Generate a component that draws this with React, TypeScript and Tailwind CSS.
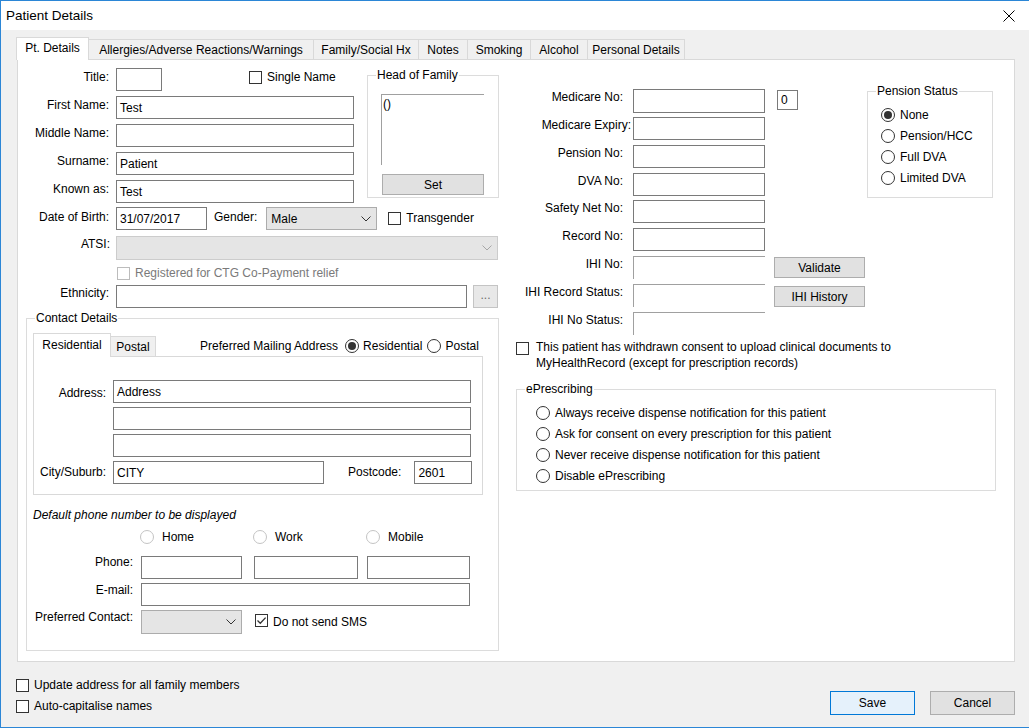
import React from 'react';

const FONT = "font-['Liberation_Sans',Arial,sans-serif]";

type Cls = { className?: string };

function TextBox({ className = '', value }: Cls & { value?: string }) {
  return (
    <div className={`flex h-[23px] shrink-0 items-center border border-[#7a7a7a] bg-white pl-[3px] ${className}`}>
      {value}
    </div>
  );
}

// read-only IHI boxes only show the sunken top/left edge
function ReadOnlyBox({ className = '' }: Cls) {
  return <div className={`h-[23px] w-[132px] shrink-0 border-t border-l border-[#a0a0a0] ${className}`} />;
}

function Chevron({ color = '#333333' }: { color?: string }) {
  return (
    <svg width="10" height="6" viewBox="0 0 10 6" className="shrink-0">
      <path d="M0.5 0.5 L5 5 L9.5 0.5" fill="none" stroke={color} strokeWidth="1" />
    </svg>
  );
}

function Combo({ className = '', value, disabled }: Cls & { value?: string; disabled?: boolean }) {
  return (
    <div
      className={`flex shrink-0 items-center justify-between border bg-[#e5e5e5] pl-[4px] pr-[5px] ${
        disabled ? 'border-[#cccccc]' : 'border-[#acacac]'
      } ${className}`}
    >
      <span>{value}</span>
      <Chevron color={disabled ? '#a6a6a6' : '#333333'} />
    </div>
  );
}

function Button({ className = '', children }: Cls & { children?: React.ReactNode }) {
  return (
    <div className={`flex shrink-0 items-center justify-center border border-[#adadad] bg-[#e1e1e1] ${className}`}>
      {children}
    </div>
  );
}

function Check({ className = '', checked, disabled }: Cls & { checked?: boolean; disabled?: boolean }) {
  return (
    <span
      className={`flex h-[13px] w-[13px] shrink-0 items-center justify-center border bg-white ${
        disabled ? 'border-[#bcbcbc]' : 'border-[#333333]'
      } ${className}`}
    >
      {checked && (
        <svg width="11" height="11" viewBox="0 0 11 11">
          <path d="M1.5 5.5 L4.3 8.3 L9.6 2.6" fill="none" stroke="#333333" strokeWidth="1.3" />
        </svg>
      )}
    </span>
  );
}

function Radio({ className = '', checked, disabled }: Cls & { checked?: boolean; disabled?: boolean }) {
  return (
    <span
      className={`flex h-[14px] w-[14px] shrink-0 items-center justify-center rounded-full border bg-white ${
        disabled ? 'border-[#c4c4c4]' : 'border-[#333333]'
      } ${className}`}
    >
      {checked && <span className="h-[8px] w-[8px] rounded-full bg-[#333333]" />}
    </span>
  );
}

function Group({ title, className = '', children }: Cls & { title: string; children?: React.ReactNode }) {
  return (
    <div className={`flex shrink-0 flex-col border border-[#dcdcdc] ${className}`}>
      <div className="-mt-[8px] ml-[8px] w-fit bg-white px-[1px] leading-[14px]">{title}</div>
      {children}
    </div>
  );
}

function Label({ className = '', children }: Cls & { children?: React.ReactNode }) {
  return <div className={`shrink-0 whitespace-nowrap text-right ${className}`}>{children}</div>;
}

const TABS = [
  { label: 'Allergies/Adverse Reactions/Warnings', w: 'w-[225px]' },
  { label: 'Family/Social Hx', w: 'w-[105px]' },
  { label: 'Notes', w: 'w-[49px]' },
  { label: 'Smoking', w: 'w-[63px]' },
  { label: 'Alcohol', w: 'w-[57px]' },
  { label: 'Personal Details', w: 'w-[97px]' },
];

const NAME_ROWS: [string, string][] = [
  ['First Name:', 'Test'],
  ['Middle Name:', ''],
  ['Surname:', 'Patient'],
  ['Known as:', 'Test'],
];

const RIGHT_ROWS = [
  { label: 'Pension No:', mt: 'mt-[5px]' },
  { label: 'DVA No:', mt: 'mt-[5px]' },
  { label: 'Safety Net No:', mt: 'mt-[4px]' },
  { label: 'Record No:', mt: 'mt-[5px]' },
];

const PENSION = ['None', 'Pension/HCC', 'Full DVA', 'Limited DVA'];

const EPRESCRIBING = [
  'Always receive dispense notification for this patient',
  'Ask for consent on every prescription for this patient',
  'Never receive dispense notification for this patient',
  'Disable ePrescribing',
];

function LeftColumn() {
  return (
    <div className="flex w-[481px] shrink-0 flex-col">
      <div className="flex">
        <div className="flex w-[349px] shrink-0 flex-col">
          <div className="mt-[8px] flex items-start">
            <Label className="w-[91px] pt-[2px]">Title:</Label>
            <TextBox className="ml-[7px] w-[46px]" />
            <Check className="ml-[87px] mt-[3px]" />
            <span className="ml-[5px] pt-[2px]">Single Name</span>
          </div>
          {NAME_ROWS.map(([label, value]) => (
            <div key={label} className="mt-[5px] flex items-start">
              <Label className="w-[91px] pt-[2px]">{label}</Label>
              <TextBox className="ml-[7px] w-[238px]" value={value} />
            </div>
          ))}
        </div>
        <Group title="Head of Family" className="mt-[15px] h-[123px] w-[132px]">
          <div className="ml-[13px] mt-[12px] h-[71px] w-[103px] border-t border-l border-[#a0a0a0] pl-[1px] pt-[2px]">
            ()
          </div>
          <Button className="ml-[14px] mt-[9px] h-[21px] w-[102px]">Set</Button>
        </Group>
      </div>

      <div className="mt-[4px] flex items-start">
        <Label className="w-[91px] pt-[3px]">Date of Birth:</Label>
        <TextBox className="ml-[7px] w-[91px]" value="31/07/2017" />
        <span className="ml-[7px] pt-[3px]">Gender:</span>
        <Combo className="ml-[9px] h-[23px] w-[111px]" value="Male" />
        <Check className="ml-[11px] mt-[5px]" />
        <span className="ml-[5px] pt-[4px]">Transgender</span>
      </div>

      <div className="mt-[6px] flex items-start">
        <Label className="w-[92px] pt-[1px]">ATSI:</Label>
        <Combo disabled className="ml-[6px] h-[24px] w-[382px]" />
      </div>

      <div className="ml-[99px] mt-[6px] flex h-[14px] items-center">
        <Check disabled />
        <span className="ml-[5px] text-[#7a7a7a]">Registered for CTG Co-Payment relief</span>
      </div>

      <div className="mt-[5px] flex items-start">
        <Label className="w-[91px] pt-[1px]">Ethnicity:</Label>
        <TextBox className="ml-[7px] w-[351px]" />
        <div className="ml-[6px] flex h-[23px] w-[25px] shrink-0 items-center justify-center border border-[#c4c4c4] bg-[#e8e8e8] pb-[3px] text-[#6d6d6d]">
          ...
        </div>
      </div>

      <Group title="Contact Details" className="ml-[8px] mt-[10px] h-[333px] w-[473px]">
        <div className="ml-[6px] mt-[8px] flex h-[23px] items-end">
          <div className="relative z-10 -mb-px flex h-[24px] w-[78px] items-center justify-center border border-b-0 border-[#d9d9d9] bg-white pb-[2px]">
            Residential
          </div>
          <div className="flex h-[20px] w-[45px] items-center justify-center border-t border-r border-[#d9d9d9] bg-[#f0f0f0] pt-[1px]">
            Postal
          </div>
          <div className="ml-[44px] flex items-center self-stretch pt-[2px]">
            <span>Preferred Mailing Address</span>
            <Radio checked className="ml-[7px]" />
            <span className="ml-[4px]">Residential</span>
            <Radio className="ml-[5px]" />
            <span className="ml-[4px]">Postal</span>
          </div>
        </div>
        <div className="ml-[6px] flex h-[139px] w-[450px] flex-col border border-[#d9d9d9] bg-white">
          <div className="mt-[23px] flex items-start">
            <Label className="w-[72px] pt-[6px]">Address:</Label>
            <TextBox className="ml-[7px] w-[358px]" value="Address" />
          </div>
          <TextBox className="ml-[79px] mt-[4px] w-[358px]" />
          <TextBox className="ml-[79px] mt-[4px] w-[358px]" />
          <div className="mt-[4px] flex items-start">
            <Label className="w-[72px] pt-[4px]">City/Suburb:</Label>
            <TextBox className="ml-[7px] w-[211px]" value="CITY" />
            <span className="ml-[24px] pt-[4px]">Postcode:</span>
            <TextBox className="ml-[13px] w-[58px]" value="2601" />
          </div>
        </div>

        <div className="ml-[6px] mt-[13px] italic">Default phone number to be displayed</div>
        <div className="ml-[113px] mt-[8px] flex h-[14px] items-center">
          {['Home', 'Work', 'Mobile'].map((t) => (
            <div key={t} className="flex w-[113px] items-center">
              <Radio disabled />
              <span className="ml-[8px]">{t}</span>
            </div>
          ))}
        </div>

        <div className="mt-[12px] flex items-start">
          <Label className="w-[106px] leading-[12px]">Phone:</Label>
          <TextBox className="ml-[8px] w-[101px]" />
          <TextBox className="ml-[12px] w-[104px]" />
          <TextBox className="ml-[9px] w-[103px]" />
        </div>
        <div className="mt-[4px] flex items-start">
          <Label className="w-[106px] pt-[1px] leading-[12px]">E-mail:</Label>
          <TextBox className="ml-[8px] w-[329px]" />
        </div>
        <div className="mt-[4px] flex items-start">
          <Label className="w-[106px] pt-[1px] leading-[12px]">Preferred Contact:</Label>
          <Combo className="ml-[8px] h-[24px] w-[101px]" />
          <Check checked className="ml-[13px] mt-[4px]" />
          <span className="ml-[5px] pt-[5px]">Do not send SMS</span>
        </div>
      </Group>
    </div>
  );
}

function RightColumn() {
  return (
    <div className="flex flex-col">
      <div className="flex items-start">
        <div className="flex w-[368px] shrink-0 flex-col">
          <div className="mt-[29px] flex items-start">
            <Label className="w-[124px] pt-[1px]">Medicare No:</Label>
            <TextBox className="ml-[10px] h-[24px] w-[132px]" />
            <div className="ml-[12px] mt-[1px] flex h-[20px] w-[21px] items-center border border-[#7a7a7a] pl-[3px]">0</div>
          </div>
          <div className="mt-[4px] flex items-start">
            <Label className="w-[132px] pt-[1px]">Medicare Expiry:</Label>
            <TextBox className="ml-[2px] w-[132px]" />
          </div>
          {RIGHT_ROWS.map((r) => (
            <div key={r.label} className={`${r.mt} flex items-start`}>
              <Label className="w-[124px] pt-[1px]">{r.label}</Label>
              <TextBox className="ml-[10px] w-[132px]" />
            </div>
          ))}
          <div className="mt-[5px] flex items-start">
            <Label className="w-[124px] pt-[1px]">IHI No:</Label>
            <ReadOnlyBox className="ml-[10px]" />
            <Button className="ml-[9px] mt-[1px] h-[21px] w-[91px]">Validate</Button>
          </div>
          <div className="mt-[5px] flex items-start">
            <Label className="w-[124px] pt-[1px]">IHI Record Status:</Label>
            <ReadOnlyBox className="ml-[10px]" />
            <Button className="ml-[9px] mt-[2px] h-[21px] w-[91px]">IHI History</Button>
          </div>
          <div className="mt-[5px] flex items-start">
            <Label className="w-[124px] pt-[1px]">IHI No Status:</Label>
            <ReadOnlyBox className="ml-[10px]" />
          </div>
        </div>

        <Group title="Pension Status" className="mt-[31px] h-[107px] w-[126px]">
          <div className="mt-[6px] flex flex-col">
            {PENSION.map((p, i) => (
              <div key={p} className="ml-[13px] flex h-[21px] items-center">
                <Radio checked={i === 0} />
                <span className="ml-[5px]">{p}</span>
              </div>
            ))}
          </div>
        </Group>
      </div>

      <div className="ml-[17px] mt-[4px] flex items-start">
        <Check className="mt-[3px]" />
        <div className="ml-[7px] leading-[16px]">
          This patient has withdrawn consent to upload clinical documents to
          <br />
          MyHealthRecord (except for prescription records)
        </div>
      </div>

      <Group title="ePrescribing" className="ml-[17px] mt-[18px] h-[102px] w-[480px]">
        <div className="mt-[6px] flex flex-col">
          {EPRESCRIBING.map((t) => (
            <div key={t} className="ml-[19px] flex h-[21px] items-center">
              <Radio />
              <span className="ml-[5px]">{t}</span>
            </div>
          ))}
        </div>
      </Group>
    </div>
  );
}

export default function App() {
  return (
    <div
      className={`flex h-[728px] w-[1029px] flex-col overflow-hidden border-t border-b border-l border-[#2b86d6] bg-[#f0f0f0] text-[12px] leading-[14px] text-black ${FONT}`}
    >
      {/* title bar */}
      <div className="flex h-[29px] shrink-0 items-center justify-between bg-white pl-[5px] pr-[14px]">
        <span className="text-[13.5px]">Patient Details</span>
        <svg width="12" height="12" viewBox="0 0 12 12">
          <path d="M0.5 0.5 L11.5 11.5 M11.5 0.5 L0.5 11.5" stroke="#000000" strokeWidth="1" />
        </svg>
      </div>

      <div className="flex flex-col pl-[16px] pt-[7px]">
        {/* tab strip */}
        <div className="flex h-[22px] items-end">
          <div className="relative z-10 -mb-px -ml-px flex h-[23px] w-[73px] items-center justify-center border border-b-0 border-[#d9d9d9] bg-white pb-[2px]">
            Pt. Details
          </div>
          {TABS.map((t) => (
            <div
              key={t.label}
              className={`flex h-[20px] items-center justify-center border-t border-r border-[#d9d9d9] bg-[#f0f0f0] pt-[1px] ${t.w}`}
            >
              {t.label}
            </div>
          ))}
        </div>

        {/* tab page */}
        <div className="flex h-[603px] w-[998px] border border-[#d9d9d9] bg-white">
          <LeftColumn />
          <RightColumn />
        </div>

        {/* footer */}
        <div className="flex w-[998px] justify-between">
          <div className="-ml-px flex flex-col">
            <div className="mt-[16px] flex h-[14px] items-center">
              <Check />
              <span className="ml-[5px]">Update address for all family members</span>
            </div>
            <div className="mt-[7px] flex h-[14px] items-center">
              <Check />
              <span className="ml-[5px]">Auto-capitalise names</span>
            </div>
          </div>
          <div className="mt-[29px] flex">
            <div className="flex h-[24px] w-[85px] items-center justify-center border border-[#0078d7] bg-[#e5f1fb]">
              Save
            </div>
            <Button className="ml-[15px] h-[24px] w-[85px]">Cancel</Button>
          </div>
        </div>
      </div>
    </div>
  );
}
